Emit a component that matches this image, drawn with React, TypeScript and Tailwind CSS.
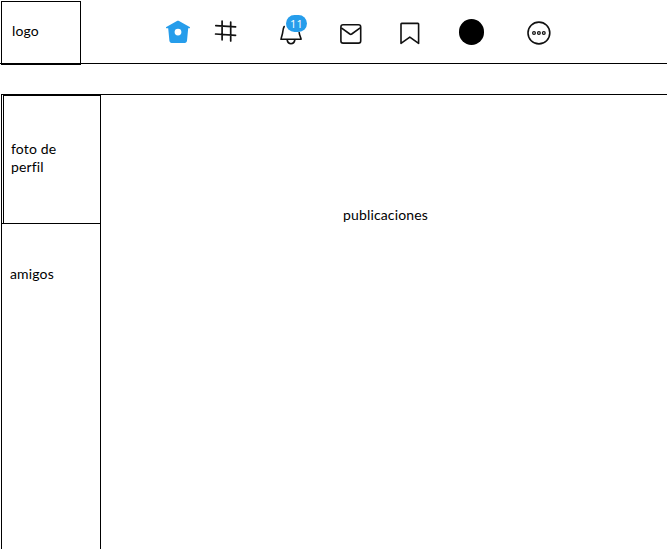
const HomeIcon = () => (
  <svg className="ml-[84px] h-8 w-[26px] shrink-0" viewBox="0 0 26 32" fill="#269deb">
    <path
      fillRule="evenodd"
      d="M12.400 4.800c.4-.2.8-.2 1.200 0l11.100 6.200c.6.400.3 1.300-.4 1.300h-1.100l-1.200 12.500c-.1 1.200-1 2.100-2.200 2.100H6.600c-1.200 0-2.100-.9-2.200-2.100L3.200 12.300H1.700c-.7 0-1-.9-.4-1.300zM13 12.700a3.400 3.400 0 1 0 0 6.800 3.400 3.400 0 0 0 0-6.800z"
    />
  </svg>
);

const HashIcon = () => (
  <svg className="ml-[22px] h-8 w-6 shrink-0" viewBox="0 0 24 32" fill="none" stroke="#111" strokeWidth="1.700" strokeLinecap="round">
    <path d="M9.100 5v18.800M17.700 6v19M2.800 9.600l19.800 1.300M2.600 18l20 1.300" />
  </svg>
);

const BellIcon = () => (
  <div className="relative ml-[42px] h-8 w-[26px] shrink-0">
    <svg className="h-8 w-[26px]" viewBox="0 0 26 32" fill="none" stroke="#111" strokeWidth="1.600" strokeLinecap="round" strokeLinejoin="round">
      <path d="M5.200 10.500c-1 1.500-1.300 3.300-1.500 5.700-.1 1.900-1.100 3.600-1.700 7.100h20.100c-.6-2.500-1.700-4.300-1.900-6.800" />
      <path d="M8.200 24c.4 2.200 1.900 3.700 3.800 3.700s3.400-1.500 3.800-3.700" />
    </svg>
    <span className="absolute -top-px left-[7px] flex h-[17px] w-[21px] items-center justify-center rounded-full bg-[#269deb] font-['Open_Sans',sans-serif] text-[11px] leading-none text-white">
      11
    </span>
  </div>
);

const MailIcon = () => (
  <svg className="ml-[34px] h-8 w-6 shrink-0" viewBox="0 0 24 32" fill="none" stroke="#111" strokeWidth="1.600" strokeLinejoin="round">
    <rect x="1.900" y="8.800" width="19.800" height="18.300" rx="2.200" />
    <path d="M2.300 11.900l8.500 6.100c.6.400 1.300.4 1.900 0l8.500-6.100" />
  </svg>
);

const BookmarkIcon = () => (
  <svg className="ml-[35px] h-8 w-6 shrink-0" viewBox="0 0 24 32" fill="none" stroke="#111" strokeWidth="1.600" strokeLinejoin="round">
    <path d="M3.700 7.400h16.200c.4 0 .7.300.7.700v19.300l-8.800-6.300L3 27.400V8.100c0-.4.300-.7.700-.7z" />
  </svg>
);

const MoreIcon = () => (
  <svg className="ml-[42px] h-8 w-[26px] shrink-0" viewBox="0 0 26 32" fill="none" stroke="#111">
    <circle cx="12.900" cy="17" r="10.900" strokeWidth="1.600" />
    <circle cx="8" cy="17" r="1.400" strokeWidth="1.200" />
    <circle cx="12.900" cy="17" r="1.400" strokeWidth="1.200" />
    <circle cx="17.800" cy="17" r="1.400" strokeWidth="1.200" />
  </svg>
);

export default function App() {
  return (
    <div className="flex h-[549px] w-[667px] flex-col overflow-hidden bg-white font-[Lato,sans-serif] text-[14px] leading-[18px] tracking-[0.15px] text-black [font-variant-ligatures:none]">
      <header className="flex h-16 shrink-0 border-b border-black pl-px pt-px">
        <div className="h-16 w-20 shrink-0 border border-black pl-[10px] pt-5">logo</div>
        <nav className="mt-[15px] flex h-8">
          <HomeIcon />
          <HashIcon />
          <BellIcon />
          <MailIcon />
          <BookmarkIcon />
          <div className="ml-[37px] mt-[3px] h-[26px] w-[25px] shrink-0 rounded-full bg-black" />
          <MoreIcon />
        </nav>
      </header>
      <main className="ml-px mt-[30px] flex grow border-l border-t border-black">
        <aside className="flex w-[99px] shrink-0 flex-col border-r border-black">
          <div className="flex h-[129px] border-b border-black pl-px">
            <div className="-mr-px grow border-l border-r border-t border-black pl-[7px] pt-11">
              foto de
              <br />
              perfil
            </div>
          </div>
          <div className="pl-2 pt-[41px]">amigos</div>
        </aside>
        <section className="pl-[242px] pt-[111px]">publicaciones</section>
      </main>
    </div>
  );
}
